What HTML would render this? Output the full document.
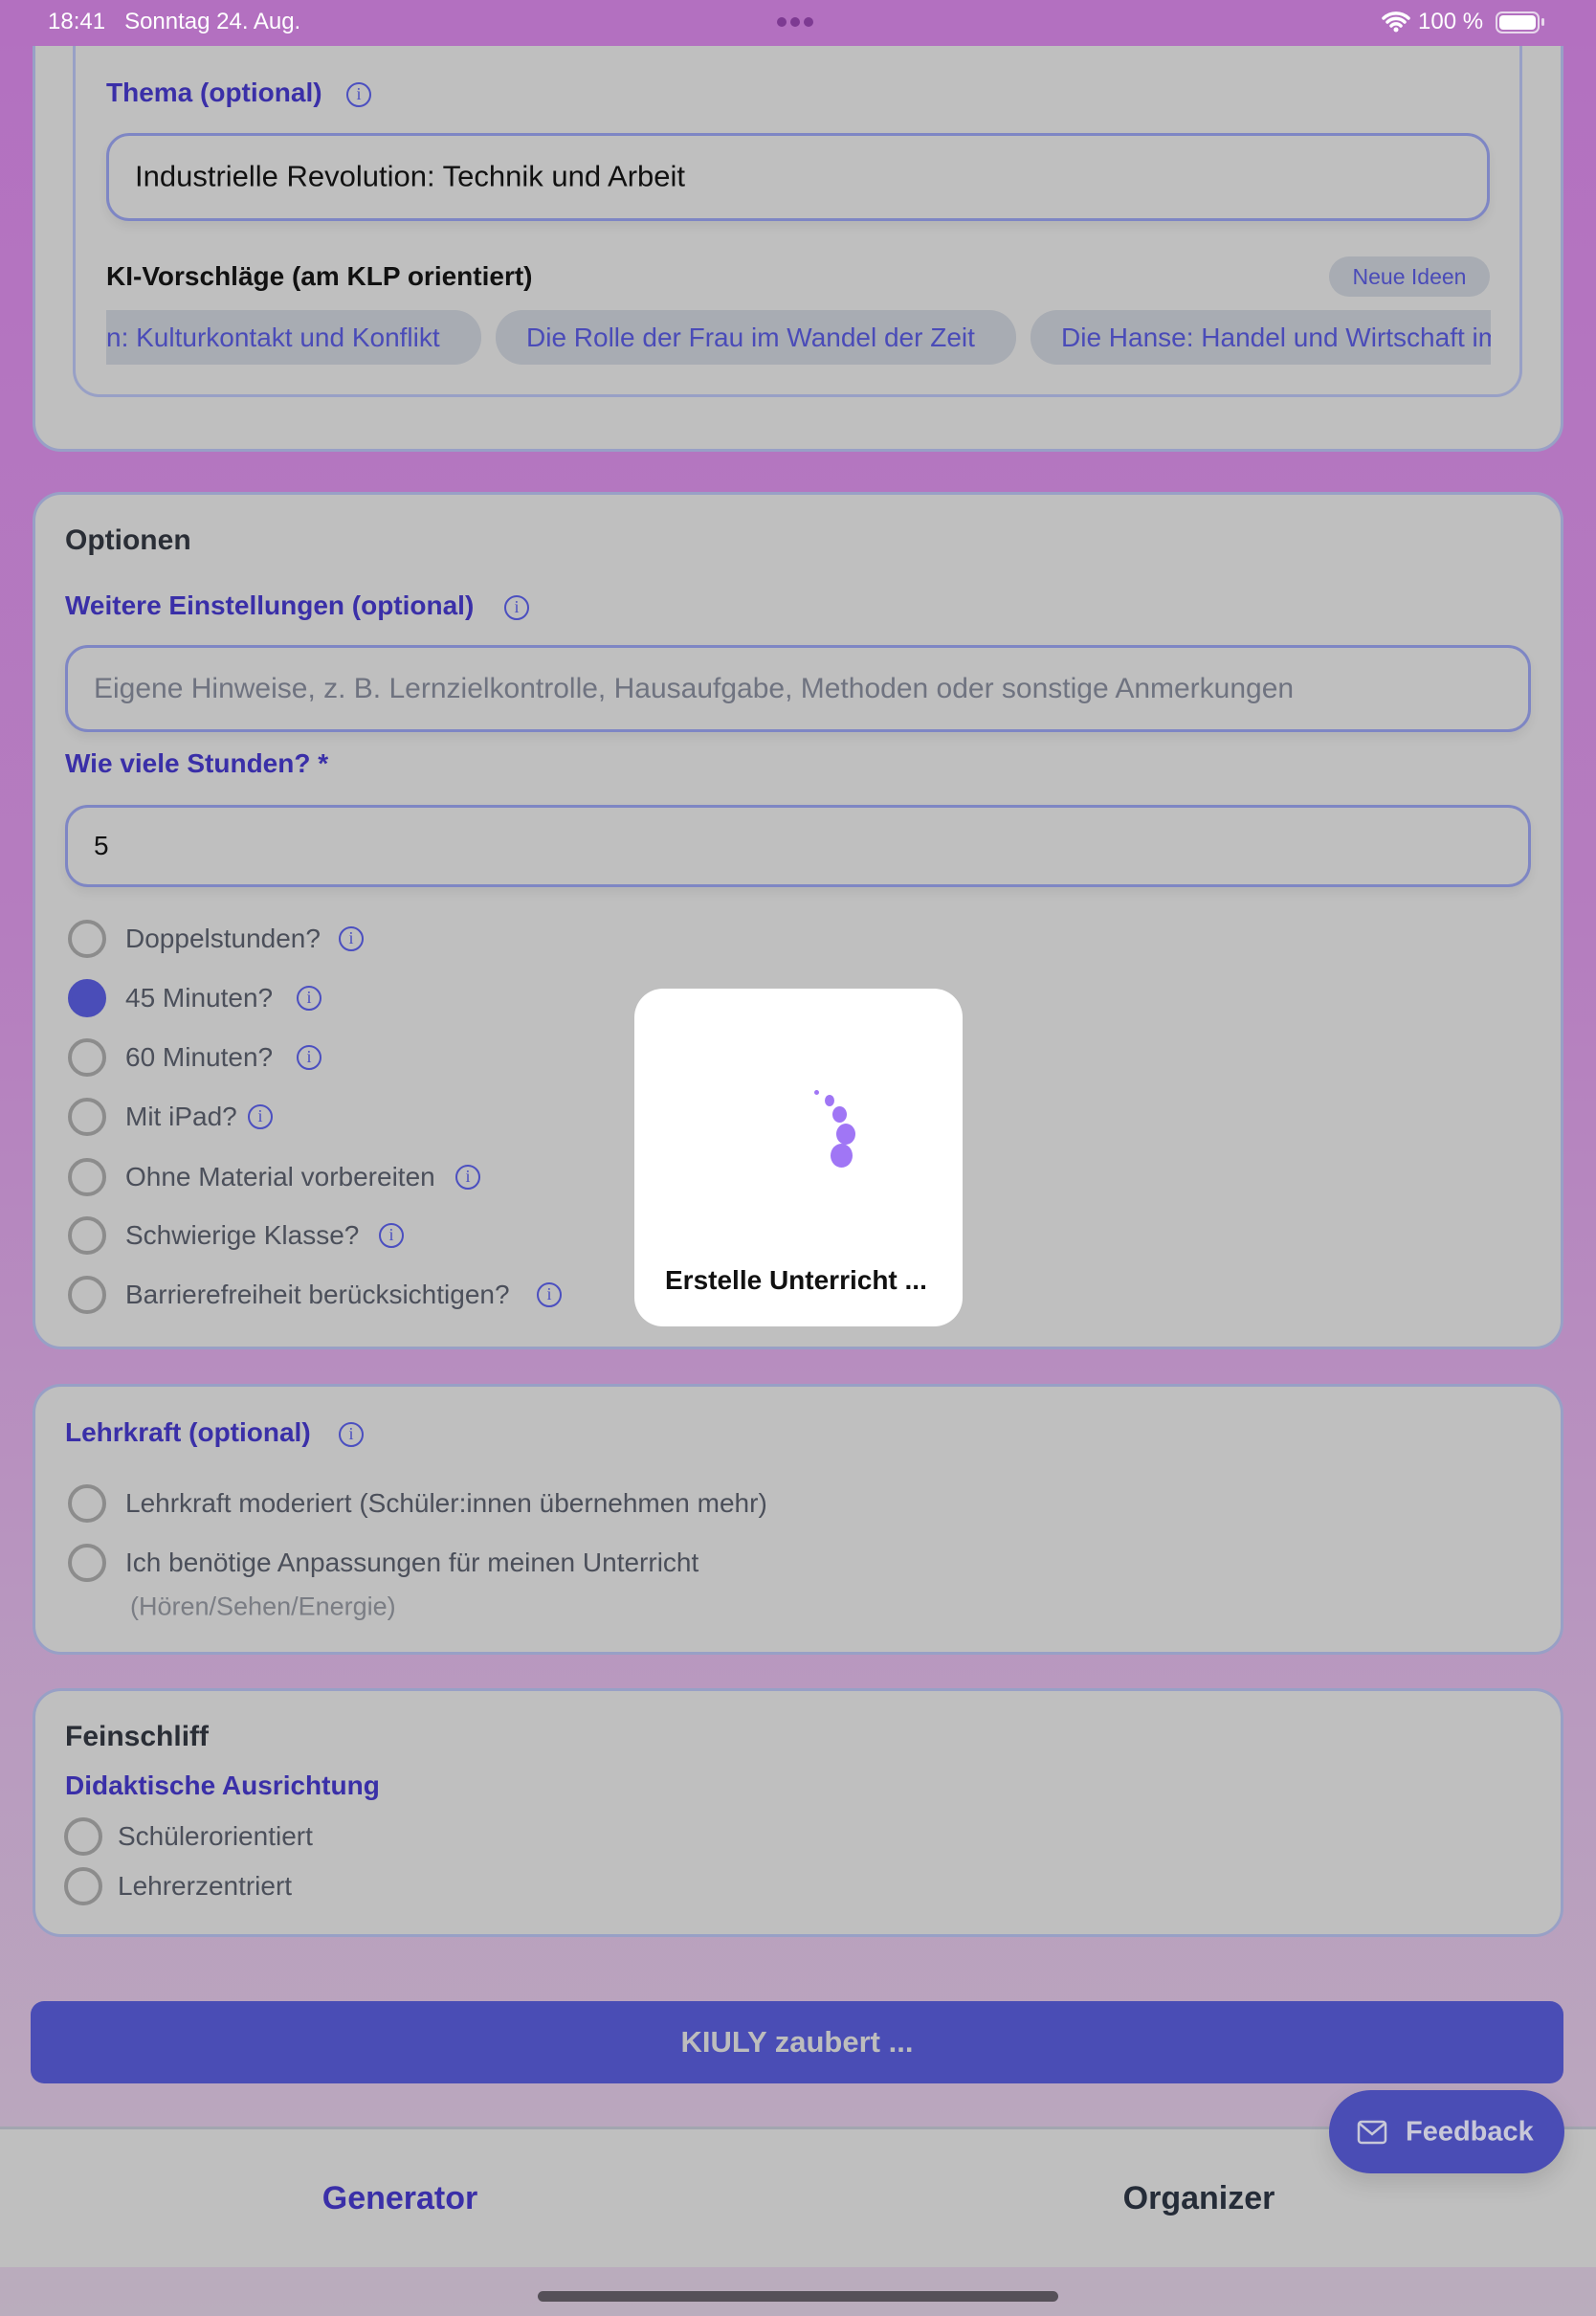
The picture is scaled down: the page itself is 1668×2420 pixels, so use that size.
<!DOCTYPE html>
<html><head><meta charset="utf-8"><style>
*{margin:0;padding:0;box-sizing:border-box}
body{width:1668px;height:2420px;position:relative;overflow:hidden;font-family:"Liberation Sans",sans-serif;background:linear-gradient(180deg,#b370c0 0%,#b57dbf 40%,#b99bbf 75%,#baadbd 100%)}
.a{position:absolute}
.t{position:absolute;line-height:1;transform:translateY(-50%);white-space:nowrap}
.sb{z-index:10}
.card{position:absolute;background:#bfbfbf;border:3px solid #98a0c6;border-radius:30px}
.lab{font-weight:bold;color:#3a2fa8;font-size:28px}
.hd{font-weight:bold;color:#2a2e36;font-size:30px}
.txt{color:#4b4f5a;font-size:28px}
.inp{position:absolute;border:3px solid #7e86c4;border-radius:24px;background:#bfbfbf;box-shadow:0 6px 10px rgba(0,0,0,.06)}
.r{position:absolute;width:40px;height:40px;border:4px solid #8c8c8c;border-radius:50%;transform:translateY(-50%)}
.i{position:absolute;width:26px;height:26px;border:2.5px solid #4b4fc0;border-radius:50%;color:#4b4fc0;font-size:18px;font-family:"Liberation Serif",serif;text-align:center;line-height:21px;transform:translateY(-50%)}
.chip{position:absolute;top:324px;height:57px;background:#a8acb3;border-radius:28px;color:#4a4bb8;font-size:28px;line-height:57px;white-space:nowrap;overflow:hidden;padding-left:32px}
</style></head><body>

<!-- card 1 -->
<div class="card" style="left:34px;top:-40px;width:1600px;height:512px"></div>
<div class="a" style="left:76px;top:-20px;width:1515px;height:435px;border:3px solid #98a0c6;border-radius:28px"></div>
<div class="t lab" style="left:111px;top:97px">Thema (optional)</div>
<div class="i" style="left:362px;top:99px">i</div>
<div class="inp" style="left:111px;top:139px;width:1446px;height:92px"></div>
<div class="t" style="left:141px;top:184px;font-size:31px;color:#111">Industrielle Revolution: Technik und Arbeit</div>
<div class="t" style="left:111px;top:289px;font-size:28px;font-weight:bold;color:#111">KI-Vorschläge (am KLP orientiert)</div>
<div class="a" style="left:1389px;top:268px;width:168px;height:42px;border-radius:21px;background:#a8acb3;color:#4a4bb8;font-size:23px;line-height:42px;text-align:center">Neue Ideen</div>
<div class="chip" style="left:111px;width:392px;border-radius:0 28px 28px 0;padding-left:0">n: Kulturkontakt und Konflikt</div>
<div class="chip" style="left:518px;width:544px">Die Rolle der Frau im Wandel der Zeit</div>
<div class="chip" style="left:1077px;width:481px;border-radius:28px 0 0 28px">Die Hanse: Handel und Wirtschaft im</div>

<!-- status bar -->
<div class="a sb" style="left:0;top:0;width:1668px;height:48px;background:#b370c0"></div>
<div class="t sb" style="left:50px;top:23px;color:#fff;font-size:24px">18:41&nbsp;&nbsp; Sonntag 24. Aug.</div>
<div class="a sb" style="left:812px;top:18px;width:10px;height:10px;border-radius:50%;background:#7d3a92;box-shadow:14px 0 #7d3a92,28px 0 #7d3a92"></div>
<svg class="a sb" style="left:1444px;top:10px" width="30" height="26" viewBox="0 0 30 26"><path d="M2 9a19 19 0 0 1 26 0M6 13a13 13 0 0 1 18 0M10 17a7 7 0 0 1 10 0" stroke="#fff" stroke-width="3.5" fill="none" stroke-linecap="round"/><circle cx="15" cy="21" r="2.5" fill="#fff"/></svg>
<div class="t sb" style="left:1482px;top:23px;color:#fff;font-size:24px">100 %</div>
<div class="a sb" style="left:1563px;top:12px;width:46px;height:23px;border:2.5px solid #e8d8ec;border-radius:7px;padding:2px"><div style="width:100%;height:100%;background:#fff;border-radius:4px"></div></div>
<div class="a sb" style="left:1611px;top:19px;width:3px;height:8px;background:#e8d8ec;border-radius:2px"></div>

<!-- card 2 -->
<div class="card" style="left:34px;top:514px;width:1600px;height:896px"></div>
<div class="t hd" style="left:68px;top:565px">Optionen</div>
<div class="t lab" style="left:68px;top:633px">Weitere Einstellungen (optional)</div>
<div class="i" style="left:527px;top:635px">i</div>
<div class="inp" style="left:68px;top:674px;width:1532px;height:91px"></div>
<div class="t" style="left:98px;top:720px;font-size:30px;color:#6f7380">Eigene Hinweise, z. B. Lernzielkontrolle, Hausaufgabe, Methoden oder sonstige Anmerkungen</div>
<div class="t lab" style="left:68px;top:798px">Wie viele Stunden? *</div>
<div class="inp" style="left:68px;top:841px;width:1532px;height:86px"></div>
<div class="t" style="left:98px;top:884px;font-size:28px;color:#111">5</div>

<div class="r" style="left:71px;top:981px"></div><div class="t txt" style="left:131px;top:981px">Doppelstunden?</div><div class="i" style="left:354px;top:981px">i</div>
<div class="r" style="left:71px;top:1043px;background:#4a4db8;border-color:#4a4db8"></div><div class="t txt" style="left:131px;top:1043px">45 Minuten?</div><div class="i" style="left:310px;top:1043px">i</div>
<div class="r" style="left:71px;top:1105px"></div><div class="t txt" style="left:131px;top:1105px">60 Minuten?</div><div class="i" style="left:310px;top:1105px">i</div>
<div class="r" style="left:71px;top:1167px"></div><div class="t txt" style="left:131px;top:1167px">Mit iPad?</div><div class="i" style="left:259px;top:1167px">i</div>
<div class="r" style="left:71px;top:1230px"></div><div class="t txt" style="left:131px;top:1230px">Ohne Material vorbereiten</div><div class="i" style="left:476px;top:1230px">i</div>
<div class="r" style="left:71px;top:1291px"></div><div class="t txt" style="left:131px;top:1291px">Schwierige Klasse?</div><div class="i" style="left:396px;top:1291px">i</div>
<div class="r" style="left:71px;top:1353px"></div><div class="t txt" style="left:131px;top:1353px">Barrierefreiheit berücksichtigen?</div><div class="i" style="left:561px;top:1353px">i</div>

<!-- modal -->
<div class="a" style="left:663px;top:1033px;width:343px;height:353px;background:#fff;border-radius:30px"></div>
<div class="a" style="left:851px;top:1139px;width:5px;height:5px;border-radius:50%;background:#a076f5"></div>
<div class="a" style="left:862px;top:1144px;width:10px;height:12px;border-radius:50%;background:#a076f5"></div>
<div class="a" style="left:870px;top:1156px;width:15px;height:17px;border-radius:50%;background:#a076f5"></div>
<div class="a" style="left:874px;top:1174px;width:20px;height:22px;border-radius:50%;background:#a076f5"></div>
<div class="a" style="left:868px;top:1195px;width:23px;height:25px;border-radius:50%;background:#a076f5"></div>
<div class="t" style="left:695px;top:1338px;font-size:28px;font-weight:bold;color:#111">Erstelle Unterricht ...</div>

<!-- card 3 -->
<div class="card" style="left:34px;top:1446px;width:1600px;height:283px"></div>
<div class="t lab" style="left:68px;top:1497px">Lehrkraft (optional)</div>
<div class="i" style="left:354px;top:1499px">i</div>
<div class="r" style="left:71px;top:1571px"></div><div class="t txt" style="left:131px;top:1571px">Lehrkraft moderiert (Schüler:innen übernehmen mehr)</div>
<div class="r" style="left:71px;top:1633px"></div><div class="t txt" style="left:131px;top:1633px">Ich benötige Anpassungen für meinen Unterricht</div>
<div class="t" style="left:136px;top:1679px;font-size:27px;color:#7a7d84">(Hören/Sehen/Energie)</div>

<!-- card 4 -->
<div class="card" style="left:34px;top:1764px;width:1600px;height:260px"></div>
<div class="t hd" style="left:68px;top:1815px">Feinschliff</div>
<div class="t lab" style="left:68px;top:1866px">Didaktische Ausrichtung</div>
<div class="r" style="left:67px;top:1919px"></div><div class="t txt" style="left:123px;top:1919px">Schülerorientiert</div>
<div class="r" style="left:67px;top:1971px"></div><div class="t txt" style="left:123px;top:1971px">Lehrerzentriert</div>

<!-- button -->
<div class="a" style="left:32px;top:2091px;width:1602px;height:86px;background:#4a4db5;border-radius:14px;color:#bdbdbd;font-size:31px;font-weight:bold;text-align:center;line-height:86px">KIULY zaubert ...</div>

<!-- tab bar -->
<div class="a" style="left:0;top:2222px;width:1668px;height:147px;background:#bfbfbf;border-top:3px solid #a2a6b0"></div>
<div class="t" style="left:418px;top:2297px;transform:translate(-50%,-50%);font-size:34px;font-weight:bold;color:#3a2fa8">Generator</div>
<div class="t" style="left:1253px;top:2297px;transform:translate(-50%,-50%);font-size:34px;font-weight:bold;color:#252c38">Organizer</div>

<!-- feedback -->
<div class="a" style="left:1389px;top:2184px;width:246px;height:87px;background:#4a4db5;border-radius:44px;box-shadow:0 10px 24px rgba(0,0,0,.12)"></div>
<svg class="a" style="left:1418px;top:2215px" width="32" height="26" viewBox="0 0 32 26"><rect x="2" y="2" width="28" height="22" rx="3" stroke="#c8c8d8" stroke-width="2.5" fill="none"/><path d="M3 4l13 11 13-11" stroke="#c8c8d8" stroke-width="2.5" fill="none"/></svg>
<div class="t" style="left:1469px;top:2228px;font-size:29px;font-weight:bold;color:#c8c8d8">Feedback</div>

<div class="a" style="left:562px;top:2394px;width:544px;height:11px;border-radius:6px;background:#555058"></div>
</body></html>
